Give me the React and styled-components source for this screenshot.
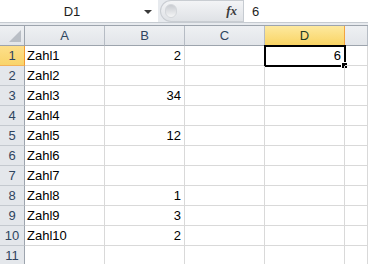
import React from "react";
import styled, { createGlobalStyle } from "styled-components";

const GlobalStyle = createGlobalStyle`
  html, body { margin: 0; padding: 0; background: #ffffff; }
  body { font-family: "Liberation Sans", Arial, sans-serif; overflow: hidden; }
`;

const Sheet = styled.div`
  width: 368px;
  height: 264px;
  overflow: hidden;
  background: #ffffff;
`;

const FormulaBar = styled.div`
  display: flex;
  height: 22px;
  border-bottom: 1px solid #c6cbd1;
  background: #e7eaee;
`;

const NameBox = styled.div`
  position: relative;
  width: 158px;
  background: #ffffff;
  display: flex;
  align-items: center;
  justify-content: center;
  font-size: 13px;
  color: #1e1e1e;
  padding-right: 14px;
  box-sizing: border-box;
`;

const DropArrow = styled.span`
  position: absolute;
  right: 6px;
  top: 10px;
  width: 0;
  height: 0;
  border-left: 4px solid transparent;
  border-right: 4px solid transparent;
  border-top: 4px solid #3a3a3a;
`;

const Splitter = styled.div`
  flex: 1;
  display: flex;
  align-items: center;
  margin-left: 2px;
  border-radius: 11px 0 0 11px;
  background: linear-gradient(#f3f4f6, #dfe2e6);
  border: 1px solid #c9cdd2;
  border-right: none;
  box-sizing: border-box;
`;

const Knob = styled.span`
  width: 10px;
  height: 12px;
  margin-left: 4px;
  border-radius: 6px;
  background: linear-gradient(#c9ccd1, #f4f5f6);
  border: 1px solid #d4d7db;
`;

const Fx = styled.span`
  margin-left: auto;
  margin-right: 6px;
  font-family: "Liberation Serif", serif;
  font-style: italic;
  font-weight: bold;
  font-size: 13px;
  color: #3c3c3c;
`;

const FormulaInput = styled.div`
  width: 125px;
  background: #ffffff;
  border-left: 1px solid #c6cbd1;
  display: flex;
  align-items: center;
  padding-left: 8px;
  box-sizing: border-box;
  font-size: 13px;
  color: #1e1e1e;
`;

const Gap = styled.div`
  height: 2px;
  background: #e7eaee;
  border-bottom: 1px solid #9da4ad;
`;

const Grid = styled.div`
  display: grid;
  grid-template-columns: 25px 80px 80px 80px 80px 1fr;
  grid-auto-rows: 20px;
  grid-template-rows: 20px;
`;

const ColHeader = styled.div`
  position: relative;
  display: flex;
  align-items: center;
  justify-content: center;
  font-size: 13px;
  color: ${(p) => (p.$active ? "#1f3a24" : "#2f4560")};
  background: ${(p) =>
    p.$active
      ? "linear-gradient(#fde99f, #f9d464)"
      : "linear-gradient(#eef0f3, #e2e5e9)"};
  border-right: 1px solid ${(p) => (p.$active ? "#f2a440" : "#b6bcc4")};
  border-bottom: 1px solid ${(p) => (p.$active ? "#f29a2f" : "#9da4ad")};
  box-sizing: border-box;
`;

const Corner = styled(ColHeader)`
  border-right: 1px solid #9da4ad;
`;

const SelectAll = styled.span`
  position: absolute;
  right: 3px;
  bottom: 3px;
  width: 0;
  height: 0;
  border-left: 12px solid transparent;
  border-bottom: 12px solid #b9bec5;
`;

const RowHeader = styled.div`
  display: flex;
  align-items: center;
  justify-content: center;
  font-size: 13px;
  color: #2f4560;
  background: ${(p) =>
    p.$active ? "linear-gradient(#fddf8a, #f9d46a)" : "#e4e7eb"};
  border-right: 1px solid ${(p) => (p.$active ? "#f29a2f" : "#9da4ad")};
  border-bottom: 1px solid ${(p) => (p.$active ? "#f2b25a" : "#c4c9cf")};
  box-sizing: border-box;
`;

const Cell = styled.div`
  position: relative;
  display: flex;
  align-items: center;
  justify-content: ${(p) => (p.$num ? "flex-end" : "flex-start")};
  padding: 0 3px 0 2px;
  font-size: 13px;
  color: #000000;
  border-right: 1px solid #d9d9d9;
  border-bottom: 1px solid #d9d9d9;
  box-sizing: border-box;
`;

const Selection = styled.span`
  position: absolute;
  left: -1px;
  top: -1px;
  right: -2px;
  bottom: -2px;
  border: 2px solid #000000;
  pointer-events: none;
`;

const FillHandle = styled.span`
  position: absolute;
  right: -4px;
  bottom: -4px;
  width: 5px;
  height: 5px;
  background: #000000;
  border: 1px solid #ffffff;
`;

const columns = ["A", "B", "C", "D", ""];

const rows = [
  ["Zahl1", "2", "", "6"],
  ["Zahl2", "", "", ""],
  ["Zahl3", "34", "", ""],
  ["Zahl4", "", "", ""],
  ["Zahl5", "12", "", ""],
  ["Zahl6", "", "", ""],
  ["Zahl7", "", "", ""],
  ["Zahl8", "1", "", ""],
  ["Zahl9", "3", "", ""],
  ["Zahl10", "2", "", ""],
  ["", "", "", ""],
];

export default function App() {
  return (
    <Sheet>
      <GlobalStyle />
      <FormulaBar>
        <NameBox>
          D1
          <DropArrow />
        </NameBox>
        <Splitter>
          <Knob />
          <Fx>fx</Fx>
        </Splitter>
        <FormulaInput>6</FormulaInput>
      </FormulaBar>
      <Gap />
      <Grid>
        <Corner>
          <SelectAll />
        </Corner>
        {columns.map((c, i) => (
          <ColHeader key={i} $active={c === "D"}>
            {c}
          </ColHeader>
        ))}
        {rows.map((r, ri) => (
          <React.Fragment key={ri}>
            <RowHeader $active={ri === 0}>{ri + 1}</RowHeader>
            {r.map((v, ci) => (
              <Cell key={ci} $num={ci > 0}>
                {v}
                {ri === 0 && ci === 3 && (
                  <Selection>
                    <FillHandle />
                  </Selection>
                )}
              </Cell>
            ))}
            <Cell />
          </React.Fragment>
        ))}
      </Grid>
    </Sheet>
  );
}
